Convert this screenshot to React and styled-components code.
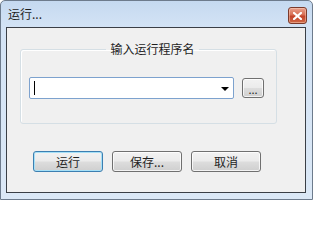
import React from 'react'
import styled, { createGlobalStyle } from 'styled-components'

const Global = createGlobalStyle`
    html, body {
        margin: 0;
        padding: 0;
        background: #ffffff;
    }
    * {
        box-sizing: border-box;
    }
`

const FONT = `"Noto Sans CJK SC", "Liberation Sans", sans-serif`

const Frame = styled.div`
    width: 313px;
    height: 200px;
    border: 1px solid #6d7b8c;
    border-radius: 5px 5px 0 0;
    background: linear-gradient(180deg, #c5d9f0 0px, #d3e3f5 26px, #dbe8f6 100%);
    padding: 0 6px 6px 5px;
    display: flex;
    flex-direction: column;
    font-family: ${FONT};
`

const TitleBar = styled.div`
    height: 26px;
    display: flex;
    align-items: center;
    justify-content: space-between;
    padding: 0 0 0 2px;
`

const Title = styled.span`
    font-size: 12px;
    color: #1e1e1e;
    line-height: 1;
    margin-top: -1px;
`

const CloseButton = styled.div`
    align-self: flex-start;
    width: 19px;
    height: 17px;
    margin-top: 6px;
    margin-right: -1px;
    border: 1px solid #7a3a2c;
    border-radius: 3px;
    background: linear-gradient(180deg, #e9a08c 0%, #d86f54 45%, #c3432a 55%, #cf6a47 100%);
    box-shadow: inset 0 0 0 1px rgba(255, 220, 200, 0.45);
    display: flex;
    align-items: center;
    justify-content: center;
`

const Client = styled.div`
    flex: 1;
    border: 1px solid #3a3f46;
    background: #f0f0f0;
    display: flex;
    flex-direction: column;
    padding: 13px 0 0 13px;
`

const Group = styled.fieldset`
    width: 257px;
    height: 83px;
    margin: 0;
    padding: 0 0 0 8px;
    border: 1px solid #d5dfe5;
    border-radius: 3px;
    box-shadow: inset 1px 1px 0 #ffffff;
    display: flex;
    align-items: flex-start;
    gap: 8px;
`

const Legend = styled.legend`
    margin: 0 auto;
    padding: 0 4px;
    font-size: 12px;
    line-height: 16px;
    color: #1e1e1e;
`

const Combo = styled.div`
    margin-top: 20px;
    width: 205px;
    height: 22px;
    background: #ffffff;
    border: 1px solid #7da2ce;
    border-radius: 2px;
    display: flex;
    align-items: center;
    justify-content: space-between;
    padding: 0 4px 0 4px;
`

const Caret = styled.span`
    width: 1px;
    height: 14px;
    background: #000000;
`

const Arrow = styled.span`
    width: 0;
    height: 0;
    border-left: 4px solid transparent;
    border-right: 4px solid transparent;
    border-top: 4px solid #000000;
    margin-top: 1px;
`

const Button = styled.div`
    width: ${p => p.$w || 70}px;
    height: ${p => p.$h || 21}px;
    border: 1px solid ${p => (p.$focus ? '#3c7fb1' : '#707070')};
    border-radius: 3px;
    background: linear-gradient(180deg, #f2f2f2 0%, #ebebeb 48%, #dddddd 52%, #cfcfcf 100%);
    box-shadow: inset 0 0 0 1px ${p => (p.$focus ? '#a6e0f7' : 'rgba(255,255,255,0.75)')};
    display: flex;
    align-items: center;
    justify-content: center;
    font-size: 12px;
    color: #1e1e1e;
    line-height: 1;
`

const Browse = styled(Button)`
    margin-top: 21px;
    font-size: 11px;
    padding-top: 3px;
`

const ButtonRow = styled.div`
    display: flex;
    gap: 9px;
    margin-top: 27px;
    padding-left: 13px;
`

function CloseIcon() {
    return (
        <svg width="9" height="8" viewBox="0 0 9 8">
            <path d="M1 1 L8 7 M8 1 L1 7" stroke="#ffffff" strokeWidth="2.2" strokeLinecap="square" />
        </svg>
    )
}

export default function App() {
    return (
        <>
            <Global />
            <Frame>
                <TitleBar>
                    <Title>运行...</Title>
                    <CloseButton>
                        <CloseIcon />
                    </CloseButton>
                </TitleBar>
                <Client>
                    <Group>
                        <Legend>输入运行程序名</Legend>
                        <Combo>
                            <Caret />
                            <Arrow />
                        </Combo>
                        <Browse $w={22} $h={20}>...</Browse>
                    </Group>
                    <ButtonRow>
                        <Button $focus>运行</Button>
                        <Button>保存...</Button>
                        <Button>取消</Button>
                    </ButtonRow>
                </Client>
            </Frame>
        </>
    )
}
